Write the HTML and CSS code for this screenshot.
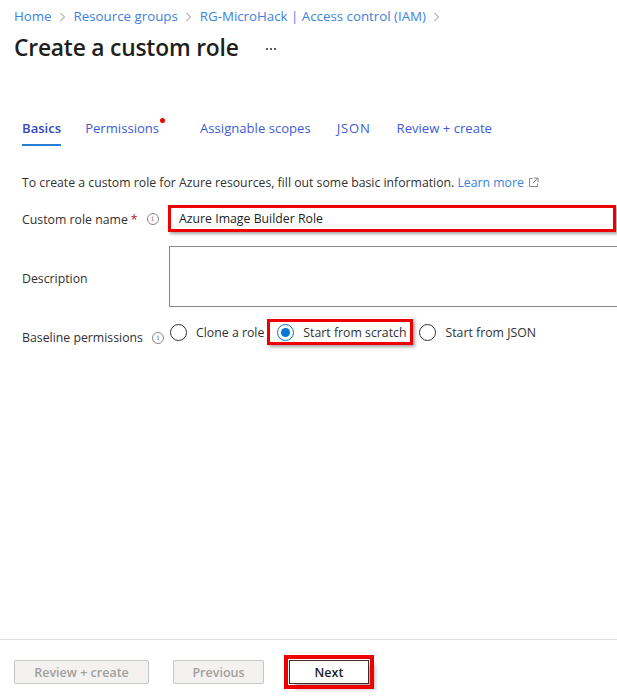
FILE: index.html
```html
<!DOCTYPE html>
<html>
<head>
<meta charset="utf-8">
<link rel="stylesheet" href="styles.css">
</head>
<body>
<div class="page">
  <main class="main">
    <nav class="crumbs">
      <a class="crumb">Home</a><svg class="sep" width="7" height="10" viewBox="0 0 7 10"><path d="M1.5 1L5.5 5L1.5 9" fill="none" stroke="#8a8886" stroke-width="1"/></svg>
      <a class="crumb">Resource groups</a><svg class="sep" width="7" height="10" viewBox="0 0 7 10"><path d="M1.5 1L5.5 5L1.5 9" fill="none" stroke="#8a8886" stroke-width="1"/></svg>
      <a class="crumb">RG-MicroHack | Access control (IAM)</a><svg class="sep" width="7" height="10" viewBox="0 0 7 10"><path d="M1.5 1L5.5 5L1.5 9" fill="none" stroke="#8a8886" stroke-width="1"/></svg>
    </nav>
    <div class="title-row">
      <h1 class="title">Create a custom role</h1>
      <span class="more"><i></i><i></i><i></i></span>
    </div>
    <div class="tabs">
      <span class="tab active">Basics</span>
      <span class="tab dotted">Permissions<span class="dot"></span></span>
      <span class="tab">Assignable scopes</span>
      <span class="tab json">JSON</span>
      <span class="tab">Review + create</span>
    </div>
    <p class="intro">To create a custom role for Azure resources, fill out some basic information. <a class="link">Learn more</a><svg class="ext" width="11" height="11" viewBox="0 0 11 11"><path d="M4.5 1.5H1.5V9.5H9.5V6.5" fill="none" stroke="#8a8886" stroke-width="1"/><path d="M6 1H10V5M10 1L5 6" fill="none" stroke="#8a8886" stroke-width="1"/></svg></p>

    <div class="row row-name">
      <div class="label">Custom role name <span class="req">*</span><span class="info">i</span></div>
      <div class="input highlight">Azure Image Builder Role</div>
    </div>
    <div class="row row-desc">
      <div class="label">Description</div>
      <div class="textarea"></div>
    </div>
    <div class="row row-base">
      <div class="label label-low">Baseline permissions<span class="info">i</span></div>
      <div class="radios">
        <span class="opt opt-clone"><span class="radio"></span>Clone a role</span>
        <span class="opt opt-sel"><span class="radio on"></span>Start from scratch</span>
        <span class="opt"><span class="radio"></span>Start from JSON</span>
      </div>
    </div>
  </main>
  <footer class="footer">
    <button class="btn btn-dis btn-review">Review + create</button>
    <button class="btn btn-dis btn-prev">Previous</button>
    <button class="btn btn-next">Next</button>
  </footer>
</div>
</body>
</html>
```

FILE: styles.css
```css
* { box-sizing: border-box; }
html, body { margin: 0; padding: 0; background: #fff; }
body {
  font-family: "Segoe UI", "Open Sans", "Noto Sans", sans-serif;
  color: #323130;
  font-size: 13px;
}
.page {
  height: 698px;
  display: flex;
  flex-direction: column;
  overflow: hidden;
}
.main { flex: 1; }

.crumbs {
  display: flex;
  align-items: center;
  padding: 6px 14px 0;
  height: 26px;
  font-size: 13.3px;
  line-height: 20px;
}
.crumb { color: #3b82e0; }
.sep { margin: 1px 8px 0 7px; flex: none; }

.title-row {
  display: flex;
  align-items: center;
  padding: 6px 14px 0;
  height: 38px;
}
.title {
  margin: 0;
  font-size: 22.8px;
  font-weight: 600;
  color: #201f1e;
  line-height: 32px;
  letter-spacing: -0.2px;
}
.more { display: flex; gap: 2px; margin-left: 27px; margin-top: 2px; }
.more i { width: 2px; height: 2px; background: #605e5c; display: block; }

.tabs {
  display: flex;
  margin: 48px 0 0 22px;
  font-size: 13.1px;
  line-height: 20px;
}
.tab {
  color: #3d5bd9;
  padding: 6px 0;
  margin-right: 26px;
  border-bottom: 2px solid transparent;
  position: relative;
}
.tab.active {
  font-weight: 600;
  color: #3447c4;
  border-bottom-color: #2b7cd3;
  margin-right: 24px;
}
.tab.dotted { margin-right: 41px; }
.tab.json { letter-spacing: 0.8px; }
.dot {
  position: absolute;
  width: 5px; height: 5px;
  border-radius: 50%;
  background: #e00;
  right: -6px;
  top: 6px;
}

.intro {
  margin: 27px 0 0 22px;
  line-height: 20px;
  font-size: 12.25px;
  color: #323130;
}
.link { color: #3b82e0; }
.ext { margin-left: 4px; vertical-align: -1px; }

.row {
  display: flex;
  align-items: center;
  padding-left: 22px;
}
.label {
  width: 146px;
  flex: none;
  display: flex;
  align-items: center;
  font-size: 12.3px;
  color: #323130;
  white-space: nowrap;
}
.req { color: #a4262c; margin-left: 3px; }
.info {
  width: 12px; height: 12px;
  border: 1px solid #8a8886;
  border-radius: 50%;
  color: #8a8886;
  font-size: 8px;
  line-height: 10px;
  text-align: center;
  margin-left: 9px;
  font-family: "DejaVu Serif", serif;
}
.row-name { margin-top: 12px; }
.row-name .label { padding-top: 1px; }
.input {
  flex: 1;
  height: 27px;
  display: flex;
  align-items: center;
  padding-left: 8px;
  font-size: 12.3px;
  color: #201f1e;
}
.highlight {
  border: 3px solid #ee0000;
  margin-right: 1px;
  box-shadow: 2px 2px 3px rgba(0,0,0,0.35);
}
.row-desc { margin-top: 14px; }
.row-desc .label { padding-top: 3px; }
.textarea {
  flex: 1;
  height: 61px;
  border: 1px solid #8a8886;
  border-right: none;
  margin-left: 1px;
}
.row-base { margin-top: 12px; align-items: flex-start; }
.label-low { padding-top: 10px; }
.radios { display: flex; align-items: center; margin-left: 2px; }
.opt {
  display: flex;
  align-items: center;
  font-size: 12.3px;
  color: #323130;
  height: 26px;
}
.radio {
  width: 17px; height: 17px;
  border: 1px solid #323130;
  border-radius: 50%;
  margin-right: 9px;
  position: relative;
  flex: none;
}
.radio.on { border-color: #0078d4; }
.radio.on::after {
  content: "";
  position: absolute;
  width: 9px; height: 9px;
  border-radius: 50%;
  background: #0078d4;
  left: 3px; top: 3px;
}
.opt-clone { margin-right: 3px; }
.opt-sel {
  border: 3px solid #ee0000;
  padding: 0 4px 0 7px;
  margin-right: 6px;
  box-shadow: 2px 2px 3px rgba(0,0,0,0.35);
}

.footer {
  border-top: 1px solid #e1dfdd;
  height: 59px;
  display: flex;
  align-items: flex-start;
  padding: 20px 0 0 14px;
}
.btn {
  height: 24px;
  font-family: inherit;
  font-size: 12.5px;
  font-weight: 600;
  padding: 0;
  border-radius: 2px;
}
.btn-dis {
  background: #f3f2f1;
  border: 1px solid #c8c6c4;
  color: #a19f9d;
}
.btn-review { width: 135px; margin-right: 24px; }
.btn-prev { width: 91px; margin-right: 25px; }
.btn-next {
  width: 80px;
  background: #fff;
  border: 1px solid #323130;
  border-radius: 0;
  color: #201f1e;
  outline: 4px solid #ee0000;
  outline-offset: 1px;
  box-shadow: 6px 5px 4px 0 rgba(0,0,0,0.3);
}
```
